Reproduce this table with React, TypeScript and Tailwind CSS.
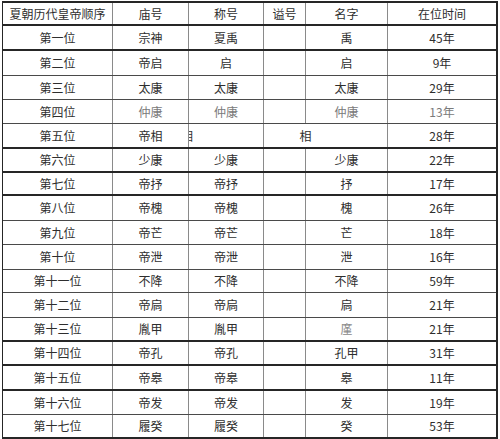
type Row = {
  order: string
  temple: string
  title: string
  name: string
  years: string
  h: string
  thick?: boolean
  faint?: boolean
  faintName?: boolean
}

const rows: Row[] = [
  { order: '第一位', temple: '宗神', title: '夏禹', name: '禹', years: '45年', h: 'h-[25px]', thick: true },
  { order: '第二位', temple: '帝启', title: '启', name: '启', years: '9年', h: 'h-[25px]' },
  { order: '第三位', temple: '太康', title: '太康', name: '太康', years: '29年', h: 'h-[24px]' },
  { order: '第四位', temple: '仲康', title: '仲康', name: '仲康', years: '13年', h: 'h-[24px]', faint: true },
  { order: '第五位', temple: '帝相', title: '', name: '相', years: '28年', h: 'h-[25px]', thick: true },
  { order: '第六位', temple: '少康', title: '少康', name: '少康', years: '22年', h: 'h-[24px]', thick: true },
  { order: '第七位', temple: '帝抒', title: '帝抒', name: '抒', years: '17年', h: 'h-[23px]', thick: true },
  { order: '第八位', temple: '帝槐', title: '帝槐', name: '槐', years: '26年', h: 'h-[25px]' },
  { order: '第九位', temple: '帝芒', title: '帝芒', name: '芒', years: '18年', h: 'h-[24px]' },
  { order: '第十位', temple: '帝泄', title: '帝泄', name: '泄', years: '16年', h: 'h-[25px]' },
  { order: '第十一位', temple: '不降', title: '不降', name: '不降', years: '59年', h: 'h-[23px]' },
  { order: '第十二位', temple: '帝扃', title: '帝扃', name: '扃', years: '21年', h: 'h-[25px]' },
  { order: '第十三位', temple: '胤甲', title: '胤甲', name: '廑', years: '21年', h: 'h-[24px]', thick: true, faintName: true },
  { order: '第十四位', temple: '帝孔', title: '帝孔', name: '孔甲', years: '31年', h: 'h-[24px]', thick: true },
  { order: '第十五位', temple: '帝皋', title: '帝皋', name: '皋', years: '11年', h: 'h-[25px]', thick: true },
  { order: '第十六位', temple: '帝发', title: '帝发', name: '发', years: '19年', h: 'h-[24px]' },
  { order: '第十七位', temple: '履癸', title: '履癸', name: '癸', years: '53年', h: 'h-[24px]', thick: true },
]

const cols = 'grid grid-cols-[110px_76px_75px_42px_82px_108px]'
const cell = 'flex items-center justify-center border-r border-[#8a8a8a]'

export default function App() {
  return (
    <main
      className="h-[439px] w-[500px] overflow-hidden bg-white text-[12px] leading-none text-[#2e2e2e]"
      style={{ fontFamily: '"Noto Sans CJK SC", "Noto Sans", sans-serif' }}
    >
      <div className="mx-[2px] mt-[1px] border-t-2 border-l border-r-2 border-[#262626]">
        <div className={`${cols} h-[23px] border-b-2 border-[#262626]`}>
          <div className={cell}>夏朝历代皇帝顺序</div>
          <div className={cell}>庙号</div>
          <div className={cell}>称号</div>
          <div className={cell}>谥号</div>
          <div className={cell}>名字</div>
          <div className="flex items-center justify-center">在位时间</div>
        </div>

        {rows.map((r) => {
          const tone = r.faint ? 'text-[#7a7a7a]' : ''
          return (
            <div
              key={r.order}
              className={`${cols} ${r.h} ${
                r.thick ? 'border-b-2 border-[#262626]' : 'border-b border-[#4a4a4a]'
              }`}
            >
              <div className={cell}>{r.order}</div>
              <div className={`${cell} ${tone}`}>{r.temple}</div>
              {r.title === '' ? (
                <>
                  <div className={`${cell} justify-start overflow-hidden`}>
                    <span className="-ml-[8px]">相</span>
                  </div>
                  <div className="col-span-2 flex items-center justify-center border-r border-[#8a8a8a] pr-[40px]">
                    {r.name}
                  </div>
                </>
              ) : (
                <>
                  <div className={`${cell} ${tone}`}>{r.title}</div>
                  <div className={cell}></div>
                  <div className={`${cell} ${tone} ${r.faintName ? 'text-[#8a8a8a]' : ''}`}>{r.name}</div>
                </>
              )}
              <div className={`flex items-center justify-center ${tone}`}>{r.years}</div>
            </div>
          )
        })}
      </div>
    </main>
  )
}
